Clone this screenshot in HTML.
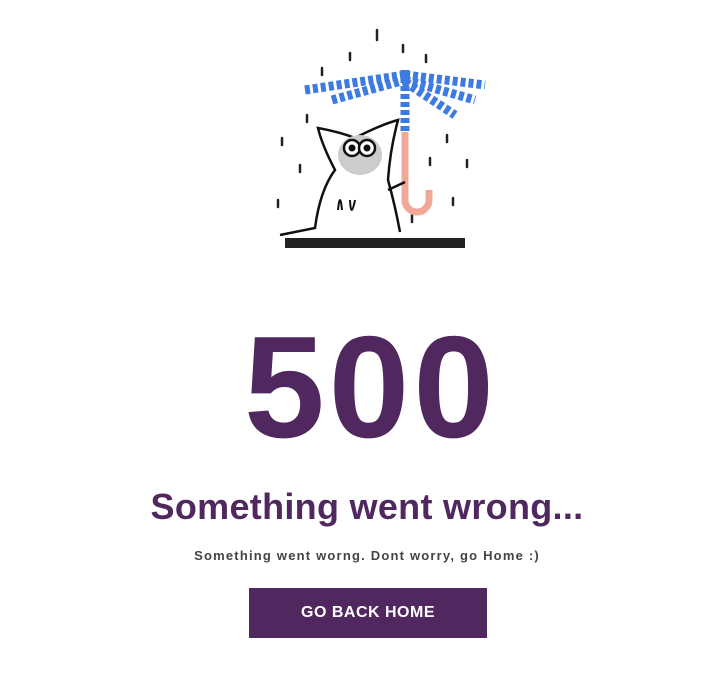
<!DOCTYPE html>
<html><head><style>
body{margin:0;background:#fff;width:716px;height:683px;position:relative;font-family:"Liberation Sans",sans-serif;overflow:hidden}
.t{position:absolute;left:9px;width:716px;text-align:center;color:#50285f;font-weight:bold}
</style></head><body>
<svg style="position:absolute;left:260px;top:20px" width="240" height="240" viewBox="0 0 240 240">
<g stroke="#222" stroke-width="2.5" stroke-linecap="round">
<line x1="117" y1="10" x2="117" y2="20"/><line x1="90" y1="33" x2="90" y2="40"/><line x1="143" y1="25" x2="143" y2="32"/><line x1="62" y1="48" x2="62" y2="55"/><line x1="166" y1="35" x2="166" y2="42"/><line x1="22" y1="118" x2="22" y2="125"/><line x1="40" y1="145" x2="40" y2="152"/><line x1="47" y1="95" x2="47" y2="102"/><line x1="18" y1="180" x2="18" y2="187"/><line x1="187" y1="115" x2="187" y2="122"/><line x1="170" y1="138" x2="170" y2="145"/><line x1="207" y1="140" x2="207" y2="147"/><line x1="193" y1="178" x2="193" y2="185"/><line x1="152" y1="195" x2="152" y2="202"/>
</g>
<g stroke="#3d7be0" stroke-width="9" stroke-linecap="butt" stroke-dasharray="5 3">
<line x1="45" y1="70" x2="145" y2="55"/><line x1="72" y1="80" x2="145" y2="60"/><line x1="145" y1="55" x2="225" y2="65"/><line x1="145" y1="60" x2="215" y2="80"/><line x1="145" y1="62" x2="195" y2="95"/><line x1="145" y1="50" x2="145" y2="112"/>
</g>
<path d="M145 112 V180 a12 12 0 0 0 24 0 V170" fill="none" stroke="#f0a898" stroke-width="7"/>
<path d="M20 215 L55 208 Q60 170 75 150 Q62 125 58 108 Q80 112 95 118 Q120 105 138 100 Q130 130 128 160 Q135 185 140 212" fill="#fff" stroke="#111" stroke-width="2.5"/>
<path d="M128 170 L145 162" stroke="#111" stroke-width="2.5"/>
<ellipse cx="100" cy="135" rx="22" ry="20" fill="#ccc"/>
<circle cx="92" cy="128" r="8" fill="#fff" stroke="#111" stroke-width="2.5"/><circle cx="107" cy="128" r="8" fill="#fff" stroke="#111" stroke-width="2.5"/>
<circle cx="92" cy="128" r="3.5" fill="#111"/><circle cx="107" cy="128" r="3.5" fill="#111"/>
<path d="M78 190 Q80 170 82 190 M90 180 Q91 200 95 180" stroke="#111" fill="none" stroke-width="2"/>
<rect x="25" y="218" width="180" height="10" fill="#222"/>
</svg>
<div class="t" style="top:305px;font-size:145px;line-height:165px;letter-spacing:4px;padding-left:4px">500</div>
<div class="t" style="top:484px;font-size:36px;line-height:46px;letter-spacing:0.3px">Something went wrong...</div>
<div class="t" style="top:547px;font-size:13px;color:#444;letter-spacing:1.2px;line-height:18px">Something went worng. Dont worry, go Home :)</div>
<div style="position:absolute;left:249px;top:588px;width:238px;height:50px;background:#50285f;color:#fff;font-weight:bold;font-size:16px;line-height:50px;text-align:center;letter-spacing:0.5px">GO BACK HOME</div>
</body></html>
